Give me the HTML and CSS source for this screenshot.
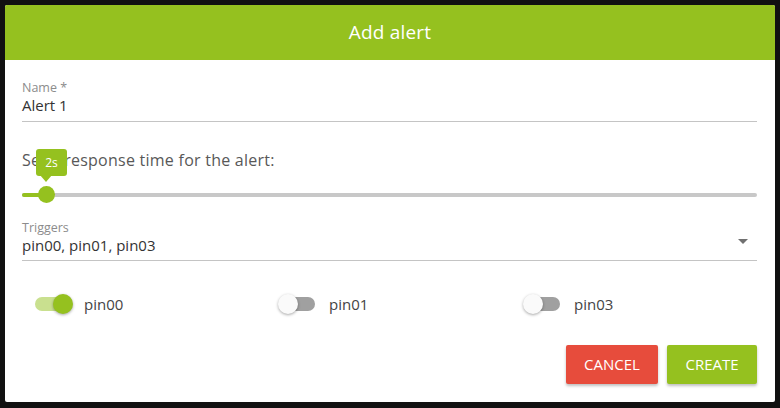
FILE: index.html
```html
<!DOCTYPE html>
<html>
<head>
<meta charset="utf-8">
<link rel="stylesheet" href="styles.css">
</head>
<body>
<div class="dialog">
  <div class="header">Add alert</div>
  <div class="content">
    <div class="field field-name">
      <div class="label">Name *</div>
      <div class="value">Alert 1</div>
    </div>
    <div class="response-text">Set a response time for the alert:</div>
    <div class="slider">
      <div class="track"><div class="fill"></div></div>
      <div class="thumb"></div>
      <div class="tip">2s</div>
      <div class="tip-arrow"></div>
    </div>
    <div class="field field-triggers">
      <div class="label">Triggers</div>
      <div class="value">pin00, pin01, pin03</div>
      <div class="caret"></div>
    </div>
    <div class="toggles">
      <div class="toggle-item">
        <div class="switch on"><div class="s-track"></div><div class="s-thumb"></div></div>
        <span class="t-label">pin00</span>
      </div>
      <div class="toggle-item">
        <div class="switch"><div class="s-track"></div><div class="s-thumb"></div></div>
        <span class="t-label">pin01</span>
      </div>
      <div class="toggle-item">
        <div class="switch"><div class="s-track"></div><div class="s-thumb"></div></div>
        <span class="t-label">pin03</span>
      </div>
    </div>
    <div class="actions">
      <button class="btn btn-cancel">CANCEL</button>
      <button class="btn btn-create">CREATE</button>
    </div>
  </div>
</div>
</body>
</html>
```
FILE: styles.css
```css
html, body {
  margin: 0;
  padding: 0;
}
body {
  background: #111;
  padding: 5px;
  font-family: "Open Sans", "Liberation Sans", sans-serif;
  box-sizing: border-box;
  height: 408px;
  overflow: hidden;
}
.dialog {
  width: 770px;
  height: 397px;
  background: #fff;
  border-radius: 2px;
  overflow: hidden;
}
.header {
  height: 55px;
  background: #95c11f;
  color: #fff;
  font-size: 19px;
  letter-spacing: 0.2px;
  line-height: 55px;
  text-align: center;
}
.content {
  padding: 21px 18px 0 17px;
}
.field {
  position: relative;
  border-bottom: 1px solid #c4c4c4;
}
.field-name {
  padding-bottom: 6px;
}
.field-triggers {
  margin-top: 16px;
  padding-bottom: 5px;
}
.label {
  font-size: 12.5px;
  line-height: 14px;
  color: #8c8c8c;
}
.value {
  font-size: 15px;
  line-height: 20px;
  color: #333;
}
.response-text {
  margin-top: 28px;
  font-size: 16px;
  letter-spacing: 0.25px;
  line-height: 20px;
  color: #585858;
}
.slider {
  position: relative;
  margin-top: 15px;
  height: 20px;
}
.track {
  position: absolute;
  left: 0;
  right: 0;
  top: 8px;
  height: 4px;
  background: #c8c8c8;
  border-radius: 2px;
}
.fill {
  width: 24px;
  height: 100%;
  background: #95c11f;
  border-radius: 2px;
}
.thumb {
  position: absolute;
  left: 16px;
  top: 1px;
  width: 17px;
  height: 17px;
  border-radius: 50%;
  background: #95c11f;
}
.tip {
  position: absolute;
  left: 14px;
  top: -36px;
  width: 31px;
  height: 27px;
  border-radius: 3px;
  background: #95c11f;
  color: #fff;
  font-size: 12px;
  line-height: 27px;
  text-align: center;
}
.tip-arrow {
  position: absolute;
  left: 18px;
  top: -10px;
  width: 0;
  height: 0;
  border-left: 6px solid transparent;
  border-right: 6px solid transparent;
  border-top: 7px solid #95c11f;
}
.caret {
  position: absolute;
  right: 9px;
  top: 18px;
  width: 0;
  height: 0;
  border-left: 5px solid transparent;
  border-right: 5px solid transparent;
  border-top: 5px solid #707070;
}
.toggles {
  margin-top: 33px;
  display: grid;
  grid-template-columns: repeat(3, 1fr);
}
.toggle-item {
  display: flex;
  align-items: center;
  gap: 11px;
  padding-left: 11px;
}
.switch {
  position: relative;
  width: 40px;
  height: 20px;
}
.s-track {
  position: absolute;
  left: 2px;
  top: 3px;
  width: 35px;
  height: 14px;
  border-radius: 7px;
  background: #a0a0a0;
}
.s-thumb {
  position: absolute;
  left: 0;
  top: 0;
  width: 20px;
  height: 20px;
  border-radius: 50%;
  background: #fafafa;
  box-shadow: 0 1px 3px rgba(0,0,0,0.35);
}
.switch.on .s-track {
  background: #c9e08f;
}
.switch.on .s-thumb {
  left: 20px;
  background: #95c11f;
}
.t-label {
  font-size: 15px;
  line-height: 20px;
  color: #444;
}
.actions {
  margin-top: 31px;
  display: flex;
  justify-content: flex-end;
  gap: 9px;
}
.btn {
  height: 39px;
  border: none;
  border-radius: 2px;
  color: #fff;
  font-family: "Open Sans", "Liberation Sans", sans-serif;
  font-size: 15px;
  padding: 0 0 2px;
  box-shadow: 0 2px 3px rgba(0,0,0,0.25);
}
.btn-cancel {
  width: 92px;
  background: #e74c3c;
}
.btn-create {
  width: 90px;
  background: #95c11f;
}
```
